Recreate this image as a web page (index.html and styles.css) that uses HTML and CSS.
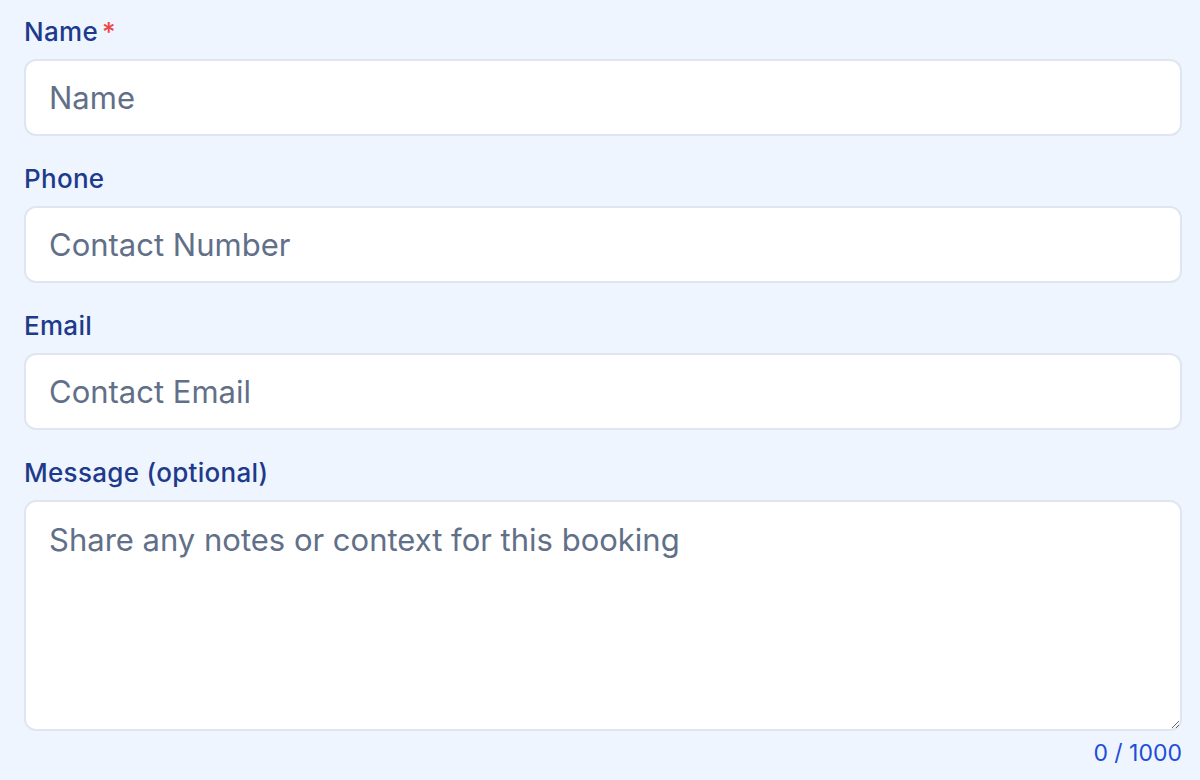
FILE: index.html
```html
<!DOCTYPE html>
<html lang="en">
<head>
	<meta charset="UTF-8">
	<title>Booking contact</title>
	<link rel="stylesheet" href="styles.css">
</head>
<body>
	<form class="form">
		<div class="field">
			<label class="label" for="name">Name<span class="req">*</span></label>
			<input class="input" id="name" type="text" placeholder="Name">
		</div>
		<div class="field">
			<label class="label" for="phone">Phone</label>
			<input class="input" id="phone" type="tel" placeholder="Contact Number">
		</div>
		<div class="field">
			<label class="label" for="email">Email</label>
			<input class="input" id="email" type="email" placeholder="Contact Email">
		</div>
		<div class="field">
			<label class="label" for="msg">Message (optional)</label>
			<textarea class="input area" id="msg" placeholder="Share any notes or context for this booking"></textarea>
			<p class="count">0 / 1000</p>
		</div>
	</form>
</body>
</html>
```

FILE: styles.css
```css
* {
	margin: 0;
	padding: 0;
	box-sizing: border-box;
}
html, body {
	height: 100%;
}
body {
	background: #eef5ff;
	font-family: Inter, "Liberation Sans", sans-serif;
}
.form {
	width: 1158px;
	margin-left: 24px;
	padding-top: 14px;
	display: flex;
	flex-direction: column;
	gap: 25px;
}
.field {
	display: flex;
	flex-direction: column;
	gap: 9px;
}
.label {
	display: block;
	height: 36px;
	color: #1e3a8a;
	font-size: 26px;
	font-weight: 500;
	line-height: 36px;
	letter-spacing: 0.3px;
}
.label .req {
	margin-left: 4px;
	color: #ef4444;
}
.input {
	width: 100%;
	height: 77px;
	padding: 0 23px;
	background: #fff;
	border: 2px solid #e0e6ef;
	border-radius: 12px;
	color: #1e293b;
	font-family: Inter, "Liberation Sans", sans-serif;
	font-size: 31px;
	outline: none;
}
.input::placeholder {
	color: #617088;
}
.area {
	height: 231px;
	padding: 18px 23px;
	line-height: 40px;
	resize: vertical;
}
.count {
	margin-top: -1px;
	color: #1d4ed8;
	font-size: 23px;
	text-align: right;
}
```
